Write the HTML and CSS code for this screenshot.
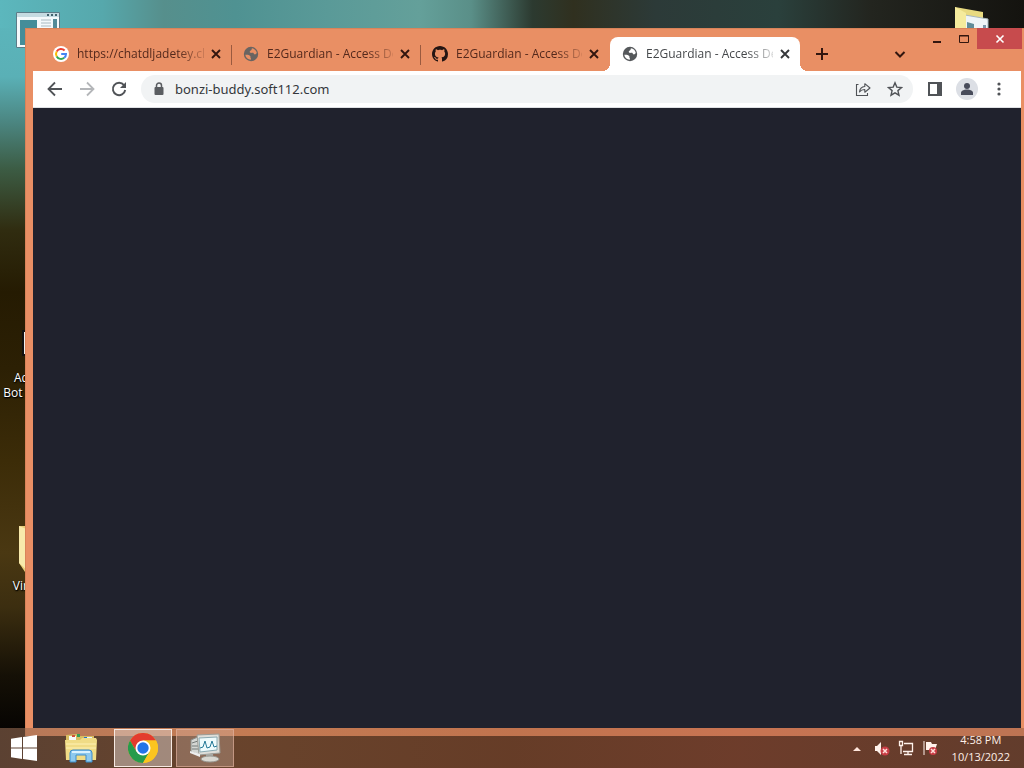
FILE: index.html
```html
<!DOCTYPE html>
<html lang="en">
<head>
<meta charset="utf-8">
<title>Desktop</title>
<link rel="stylesheet" href="styles.css">
</head>
<body>
<svg class="defs" aria-hidden="true">
  <symbol id="globe" viewBox="0 0 16 16"><circle cx="8" cy="8" r="7.200" fill="currentColor"/><path d="M2.300 8.800c2-.2 4 .1 4.900 1.200.6.8-.2 1.400.5 2 .4.500.3 1 .1 1.700-3-.2-5.200-2.200-5.500-4.900zM8.900 2.200c2.600.4 4.500 2.300 4.900 4.800-.8 1-1.500 1.700-2.400 1.300-.8-.4-.5-1.300-1.300-1.500-1-.3-2.100.6-3-.2-.8-.8-.2-1.700.6-2.100.6-.4.900-.6 1.200-2.300z" fill="var(--hole)"/></symbol>
  <symbol id="close" viewBox="0 0 16 16"><path d="M4 4l8 8M12 4l-8 8" stroke="currentColor" stroke-width="1.900"/></symbol>
</svg>
<main class="desktop">
  <div class="shortcut shortcut-app">
    <svg width="44" height="36" viewBox="0 0 44 36"><path d="M.5.500h43v35H.5z" fill="#f4f9fb" stroke="#5c7c88"/><path d="M1 1h42v4H1z" fill="#c5dbe1"/><path d="M31 2h2v2h-2zM35 2h2v2h-2zM39 2h2v2h-2z" fill="#42636f"/><path d="M4 8h17v25H4z" fill="#448d99"/><path d="M25 8h10M25 11h10M25 14h10M25 17h10" stroke="#aabac1"/><path d="M37 7h4v12h-4z" fill="#548b98"/></svg>
  </div>
  <div class="shortcut shortcut-folder">
    <svg width="34" height="32" viewBox="0 0 34 32"><path d="M0 0l28 5v27H0z" fill="#e8da80"/><path d="M10 8l23 4v20H10z" fill="#eef4f7" stroke="#a7b7bd"/><path d="M12 15l7 2v15h-7z" fill="#608c98"/><path d="M28 18h3v9h-3z" fill="#7b96aa"/><path d="M0 0l11 6v26H0z" fill="#f5eb9c"/></svg>
  </div>
  <div class="shortcut shortcut-bot">
    <svg width="20" height="26" viewBox="0 0 20 26"><path d="M1 1h18v24H1z" fill="#eee" stroke="#111" stroke-width="2"/></svg>
    <span>Adobe<br>Bot - Copy</span>
  </div>
  <div class="shortcut shortcut-vm">
    <svg width="38" height="46" viewBox="0 0 38 46"><path d="M0 0h38v46H6L0 37z" fill="#e9cf7a"/><path d="M0 0l10 4v42L0 37z" fill="#f8e9ab"/></svg>
    <span>Virtual</span>
  </div>

  <section class="window" aria-label="Browser">
    <header class="titlebar">
      <div class="tabs" role="tablist">
        <div class="tab" role="tab">
          <svg width="16" height="16" viewBox="0 0 16 16"><circle cx="8" cy="8" r="8" fill="#fff"/><g fill="none" stroke-width="2"><path d="M11.600 4.500A5 5 0 0 0 3.700 5.500" stroke="#ea4335"/><path d="M3.700 5.500a5 5 0 0 0 0 5" stroke="#fbbc05"/><path d="M3.700 10.500a5 5 0 0 0 7.500 1.300" stroke="#34a853"/><path d="M11.200 11.800A5 5 0 0 0 13 8H8.200" stroke="#4285f4"/></g></svg>
          <span class="tab-title">https://chatdljadetey.ch</span>
          <button class="tab-close" aria-label="Close tab"><svg width="16" height="16"><use href="#close"/></svg></button>
        </div>
        <div class="tab" role="tab">
          <svg class="globe" width="16" height="16"><use href="#globe"/></svg>
          <span class="tab-title">E2Guardian - Access De</span>
          <button class="tab-close" aria-label="Close tab"><svg width="16" height="16"><use href="#close"/></svg></button>
        </div>
        <div class="tab" role="tab">
          <svg width="16" height="16" viewBox="0 0 16 16"><path fill="#241513" d="M8 0C3.580 0 0 3.580 0 8c0 3.540 2.290 6.530 5.470 7.590.4.070.55-.17.55-.38 0-.19-.01-.82-.01-1.490-2.010.37-2.530-.49-2.690-.94-.09-.23-.48-.94-.82-1.130-.28-.15-.68-.52-.01-.53.630-.01 1.080.58 1.230.82.720 1.210 1.870.87 2.330.66.070-.52.280-.87.510-1.070-1.780-.2-3.640-.89-3.640-3.950 0-.87.310-1.590.82-2.150-.08-.2-.36-1.020.08-2.120 0 0 .67-.21 2.200.82.640-.18 1.320-.27 2-.27s1.360.09 2 .27c1.530-1.040 2.200-.82 2.200-.82.440 1.100.16 1.920.08 2.120.51.560.82 1.270.82 2.150 0 3.070-1.870 3.750-3.650 3.950.29.250.54.730.54 1.480 0 1.070-.01 1.930-.01 2.200 0 .21.150.46.550.38A8 8 0 0 0 16 8c0-4.420-3.580-8-8-8z"/></svg>
          <span class="tab-title">E2Guardian - Access De</span>
          <button class="tab-close" aria-label="Close tab"><svg width="16" height="16"><use href="#close"/></svg></button>
        </div>
        <div class="tab tab-active" role="tab" aria-selected="true">
          <svg class="globe" width="16" height="16"><use href="#globe"/></svg>
          <span class="tab-title">E2Guardian - Access De</span>
          <button class="tab-close" aria-label="Close tab"><svg width="16" height="16"><use href="#close"/></svg></button>
        </div>
        <button class="new-tab" aria-label="New tab"><svg width="14" height="14" viewBox="0 0 14 14"><path d="M7 1v12M1 7h12" stroke="currentColor" stroke-width="2"/></svg></button>
      </div>
      <button class="tab-search" aria-label="Search tabs"><svg width="12" height="12" viewBox="0 0 12 12"><path d="M1.500 4L6 8.500 10.500 4" fill="none" stroke="currentColor" stroke-width="2"/></svg></button>
      <div class="controls">
        <button class="control" aria-label="Minimize"><svg width="12" height="12" viewBox="0 0 12 12"><path d="M2 9h8" stroke="currentColor" stroke-width="2"/></svg></button>
        <button class="control" aria-label="Maximize"><svg width="12" height="12" viewBox="0 0 12 12"><path d="M1.500 2.500h9v7h-9zM1 3h10" fill="none" stroke="currentColor"/></svg></button>
        <button class="control control-close" aria-label="Close"><svg width="10" height="10" viewBox="0 0 10 10"><path d="M1.500 1.500l7 7M8.500 1.500l-7 7" stroke="currentColor" stroke-width="1.600"/></svg></button>
      </div>
    </header>
    <div class="toolbar">
      <button class="tool" aria-label="Back"><svg width="16" height="16" viewBox="0 0 16 16"><path d="M15 8H2M8 1.500L1.500 8 8 14.500" fill="none" stroke="currentColor" stroke-width="1.800"/></svg></button>
      <button class="tool" aria-label="Forward" disabled><svg width="16" height="16" viewBox="0 0 16 16"><path d="M1 8h13M8 1.500L14.500 8 8 14.500" fill="none" stroke="currentColor" stroke-width="1.800"/></svg></button>
      <button class="tool" aria-label="Reload"><svg width="16" height="16" viewBox="0 0 16 16"><path d="M13 4.200A6.200 6.200 0 1 0 14.200 9" fill="none" stroke="currentColor" stroke-width="1.900"/><path d="M15 1v6H9z" fill="currentColor"/></svg></button>
      <div class="omnibox">
        <svg width="12" height="14" viewBox="0 0 12 14"><path d="M3.500 6V3.500a2.500 2.500 0 0 1 5 0V6" fill="none" stroke="#5a5d61" stroke-width="1.500"/><rect x="1.500" y="5" width="9" height="8" rx="1" fill="#5a5d61"/></svg>
        <input class="address" type="text" aria-label="Address" value="bonzi-buddy.soft112.com">
        <button class="omni-button" aria-label="Share"><svg width="16" height="16" viewBox="0 0 16 16"><path d="M3.500 3.500h-2v11h11V12" fill="none" stroke="currentColor" stroke-width="1.100"/><path d="M4.500 11c.3-3.500 2-5.300 5.300-5.500V2.700L15 7l-5.200 4.200V8.500C7.400 8.400 5.800 9.200 4.500 11z" fill="none" stroke="currentColor" stroke-width="1.100" stroke-linejoin="round"/></svg></button>
        <button class="omni-button" aria-label="Bookmark"><svg width="16" height="16" viewBox="0 0 16 16"><path d="M8 1.800l1.800 4.300 4.700.4-3.600 3.100 1.100 4.600L8 11.800l-4 2.400 1.100-4.600-3.600-3.100 4.700-.4z" fill="none" stroke="currentColor" stroke-width="1.400"/></svg></button>
      </div>
      <div class="actions">
        <button class="tool" aria-label="Side panel"><svg width="14" height="14" viewBox="0 0 14 14"><path d="M1 1h12v12H1z" fill="none" stroke="currentColor" stroke-width="2"/><path d="M9 1h5v12H9z" fill="currentColor"/></svg></button>
        <button class="tool" aria-label="Profile"><svg width="22" height="22" viewBox="0 0 22 22"><circle cx="11" cy="11" r="11" fill="#dcdfe5"/><circle cx="11" cy="8" r="3" fill="#474b5a"/><path d="M5 17v-2c0-2.200 3-3.400 6-3.400s6 1.200 6 3.400v2z" fill="#474b5a"/></svg></button>
        <button class="tool" aria-label="Menu"><svg width="4" height="14" viewBox="0 0 4 14"><g fill="currentColor"><circle cx="2" cy="2" r="1.600"/><circle cx="2" cy="7" r="1.600"/><circle cx="2" cy="12" r="1.600"/></g></svg></button>
      </div>
    </div>
    <div class="page"></div>
  </section>

  <footer class="taskbar">
    <button class="start" aria-label="Start"><svg width="26" height="26" viewBox="0 0 26 26"><path d="M0 3.700L11 2v10.500H0zM12 1.900L26 0v12.500H12zM0 13.500h11V24L0 22.300zM12 13.500h14V26l-14-1.900z" fill="#fff"/></svg></button>
    <button class="task" aria-label="File Explorer"><svg width="34" height="30" viewBox="0 0 34 30"><path d="M2 2l11-1 2 2h15v22H2z" fill="#d8bd62"/><path d="M5 3h7v5H5z" fill="#f7faf7"/><path d="M13 1h3v3h-3z" fill="#359f56"/><path d="M20 4h8v3h-8z" fill="#e9f6ff"/><path d="M20 4h3v2h-3z" fill="#2474c8"/><path d="M8 2h3v2H8z" fill="#d34f39"/><path d="M1 7h15l2-2h14l1 2-1 20H2z" fill="#f0dc86"/><path d="M2 11h30M2 15h30" stroke="#fff2b5"/><path d="M6 29V20q0-3 3-3h16q3 0 3 3v9h-6v-7H12v7z" fill="#8dc9ee" stroke="#3c8dcb"/><path d="M8 19h18" stroke="#d9f2ff" stroke-width="2"/></svg></button>
    <button class="task task-active" aria-label="Google Chrome"><svg width="30" height="30" viewBox="0 0 30 30"><circle cx="15" cy="15" r="15" fill="#fbc520"/><path d="M2 7.500A15 15 0 0 1 28 7.500H15L8.500 18.800z" fill="#e33b2e"/><path d="M2 7.500A15 15 0 0 0 15 30l6.500-11.200h-13z" fill="#269b4c"/><path d="M15 7.500h13A15 15 0 0 1 15 30l6.500-11.200z" fill="#fbc520"/><circle cx="15" cy="15" r="7.500" fill="#fff"/><circle cx="15" cy="15" r="5.700" fill="#2474e8"/></svg></button>
    <button class="task task-open" aria-label="System monitor"><svg width="32" height="30" viewBox="0 0 32 30"><path d="M2 7l9-4v19l-9-3z" fill="#d4d6d3" stroke="#8a8d89"/><path d="M3 10l6-2M3 13h6M3 16h6" stroke="#737a78"/><path d="M8 2l22-1 1 19-21 2z" fill="#deded9" stroke="#9b9c96"/><path d="M10 5l18-1v13l-17 2z" fill="#eefbfc" stroke="#8aa9b1"/><path d="M11 15l3-1 2-6 2 7 3-1 2-6 2 6 3-1" fill="none" stroke="#247997"/><path d="M17 21h7v4h-7z" fill="#a9aaa5"/><ellipse cx="21" cy="26" rx="9" ry="3" fill="#d9d8d1" stroke="#979790"/><path d="M1 18l10 3v3L1 20z" fill="#eee"/></svg></button>
    <div class="tray">
      <button class="tray-button" aria-label="Show hidden icons"><svg width="8" height="16" viewBox="0 0 8 16"><path d="M0 11l4-4 4 4z" fill="#ffe6dc"/></svg></button>
      <button class="tray-button" aria-label="Volume muted"><svg width="16" height="16" viewBox="0 0 16 16"><path d="M1 6h2l4-4v13l-4-4H1z" fill="#fff2eb"/><circle cx="11" cy="11" r="4.500" fill="#c83d45"/><path d="M9 9l4 4M13 9l-4 4" stroke="#ffe0da" stroke-width="1.500"/></svg></button>
      <button class="tray-button" aria-label="Network"><svg width="16" height="16" viewBox="0 0 16 16"><path d="M6 3.500h8.500v8H5M10 12v2M6 14.500h8M1.500 1.500h3v4h-3zM3 6v8" fill="none" stroke="#fff2eb" stroke-width="1.300"/></svg></button>
      <button class="tray-button" aria-label="Action center"><svg width="16" height="16" viewBox="0 0 16 16"><path d="M2 1v14" stroke="#fff2eb"/><path d="M4 2h5l1 2h5l-2 6H4z" fill="#fff2eb"/><circle cx="11" cy="11" r="4" fill="#c83d45"/><path d="M9 9l4 4M13 9l-4 4" stroke="#ffe0da" stroke-width="1.500"/></svg></button>
      <time class="clock" datetime="2022-10-13T16:58"><span>4:58 PM</span><span>10/13/2022</span></time>
    </div>
  </footer>
</main>
</body>
</html>
```

FILE: styles.css
```css
* { box-sizing: border-box; }
body { margin: 0; font-family: "Open Sans", "Noto Sans", sans-serif; font-size: 12px; }
button { display: flex; align-items: center; justify-content: center; margin: 0; padding: 0; border: 0; background: none; color: inherit; font: inherit; flex: none; }
svg { display: block; flex: none; }
.defs { position: absolute; width: 0; height: 0; }

.desktop {
  position: relative;
  height: 100vh;
  overflow: hidden;
  background:
    linear-gradient(90deg, #5cb7bd 0%, #56a8ac 10%, #568f8c 16%, #4f9292 23%, #5a9a98 32%, #64a09a 41%, #5a8f88 46%, #2c3a30 52%, #30301f 56%, #2c3a38 64%, #2a403c 76%, #23251f 85%, #14130f 100%) top / 100% 28px no-repeat,
    linear-gradient(#5cb7bd 0%, #5ab0b6 10%, #4b8580 16%, #3c5c44 22%, #302c10 30%, #251b02 38%, #2c2004 48%, #3c2c08 60%, #4a3812 72%, #3c2e10 79%, #151006 88%, #060402 95%);
}

.shortcut { position: absolute; display: flex; flex-direction: column; align-items: center; gap: 14px; color: #fff; font-size: 12px; line-height: 15px; text-align: center; text-shadow: 0 1px 2px #000, 1px 1px 1px #000; }
.shortcut-app { left: 16px; top: 12px; }
.shortcut-folder { left: 955px; top: 7px; }
.shortcut-bot { left: 1px; top: 330px; width: 62px; white-space: nowrap; }
.shortcut-vm { left: 0; top: 526px; width: 76px; gap: 6px; }
.shortcut-vm span { padding-right: 14px; }

.window { position: absolute; inset: 28px 0 32px 25px; display: flex; flex-direction: column; padding: 0 3px 8px 8px; background: #e98f64; box-shadow: inset 1px 1px 0 #d98359; }

.titlebar { display: flex; height: 43px; flex: none; margin-right: -1px; color: #32160f; }
.tabs { display: flex; flex: 1; min-width: 0; padding: 9px 0 0 9px; }
.tab { --hole: #e98f64; position: relative; display: flex; align-items: center; gap: 8px; flex: 0 1 189px; min-width: 0; padding: 0 7px 0 11px; color: #54291c; }
.tab + .tab { padding-left: 12px; }
.tab + .tab::before { content: ""; position: absolute; left: 0; top: 8px; width: 1px; height: 20px; background: #9a5a3f; }
.tab.tab-active { --hole: #fff; flex-basis: 190px; margin-left: 1px; background: #fff; border-radius: 8px 8px 0 0; color: #45484b; }
.tab.tab-active::before, .tab-active::after { content: ""; position: absolute; top: auto; bottom: 0; width: 8px; height: 8px; }
.tab.tab-active::before { left: -8px; background: radial-gradient(circle at 0 0, transparent 8px, #fff 8px); }
.tab-active::after { right: -8px; background: radial-gradient(circle at 100% 0, transparent 8px, #fff 8px); }
.globe { color: #6a6461; }
.tab-active .globe { color: #55585b; }
.tab-title { flex: 1; min-width: 0; margin-right: -4px; white-space: nowrap; line-height: 18px; mask-image: linear-gradient(90deg, #000 calc(100% - 26px), rgba(0, 0, 0, .2)); }
.tab-close { width: 16px; height: 16px; color: #32160f; }
.tab-active .tab-close { color: #35373a; }
.new-tab { width: 28px; margin-left: 8px; }
.tab-search { width: 28px; margin: 9px 9px 0 0; }
.controls { display: flex; height: 21px; }
.control { width: 27px; height: 22px; }
.control-close { width: 45px; height: 21px; background: #c74b4d; color: #fff; }

.toolbar { display: flex; align-items: center; height: 37px; flex: none; padding: 0 6px; background: #fff; color: #505357; border-bottom: 1px solid #dfe1e4; }
.tool { width: 32px; height: 28px; }
.tool:disabled { color: #b4b6b9; }
.omnibox { display: flex; align-items: center; flex: 1; min-width: 0; height: 28px; margin: 0 6px; padding: 0 2px 0 12px; border-radius: 14px; background: #f1f3f4; }
.address { flex: 1; min-width: 0; margin: 0 0 0 10px; padding: 0; border: 0; outline: 0; background: none; color: #34373b; font: 13px/20px "Noto Sans", "Open Sans", sans-serif; }
.omni-button { width: 32px; height: 28px; }
.actions { display: flex; }
.page { flex: 1; background: #20222d; }

.taskbar { position: absolute; inset: auto 0 0 0; display: flex; align-items: center; height: 40px; background: linear-gradient(90deg, rgba(148, 106, 82, .6), rgba(170, 110, 72, .6) 22%, rgba(166, 98, 64, .6) 50%, rgba(178, 98, 70, .6) 72%, rgba(160, 98, 72, .6)); }
.start { width: 48px; height: 40px; }
.task { width: 58px; height: 38px; margin-right: 4px; }
.task-active { border: 1px solid #f6e9e2; background: rgba(222, 208, 202, .5); }
.task-open { border: 1px solid rgba(230, 180, 160, .6); background: rgba(222, 190, 178, .32); }
.start + .task { margin-left: 4px; }
.tray { display: flex; align-items: center; gap: 8px; margin-left: auto; padding-right: 14px; color: #fff0e8; }
.tray-button { min-width: 8px; height: 24px; }
.tray-button:first-child { margin-right: 5px; }
.clock { display: flex; flex-direction: column; align-items: center; margin-left: 6px; font-size: 11px; line-height: 17px; }
```
